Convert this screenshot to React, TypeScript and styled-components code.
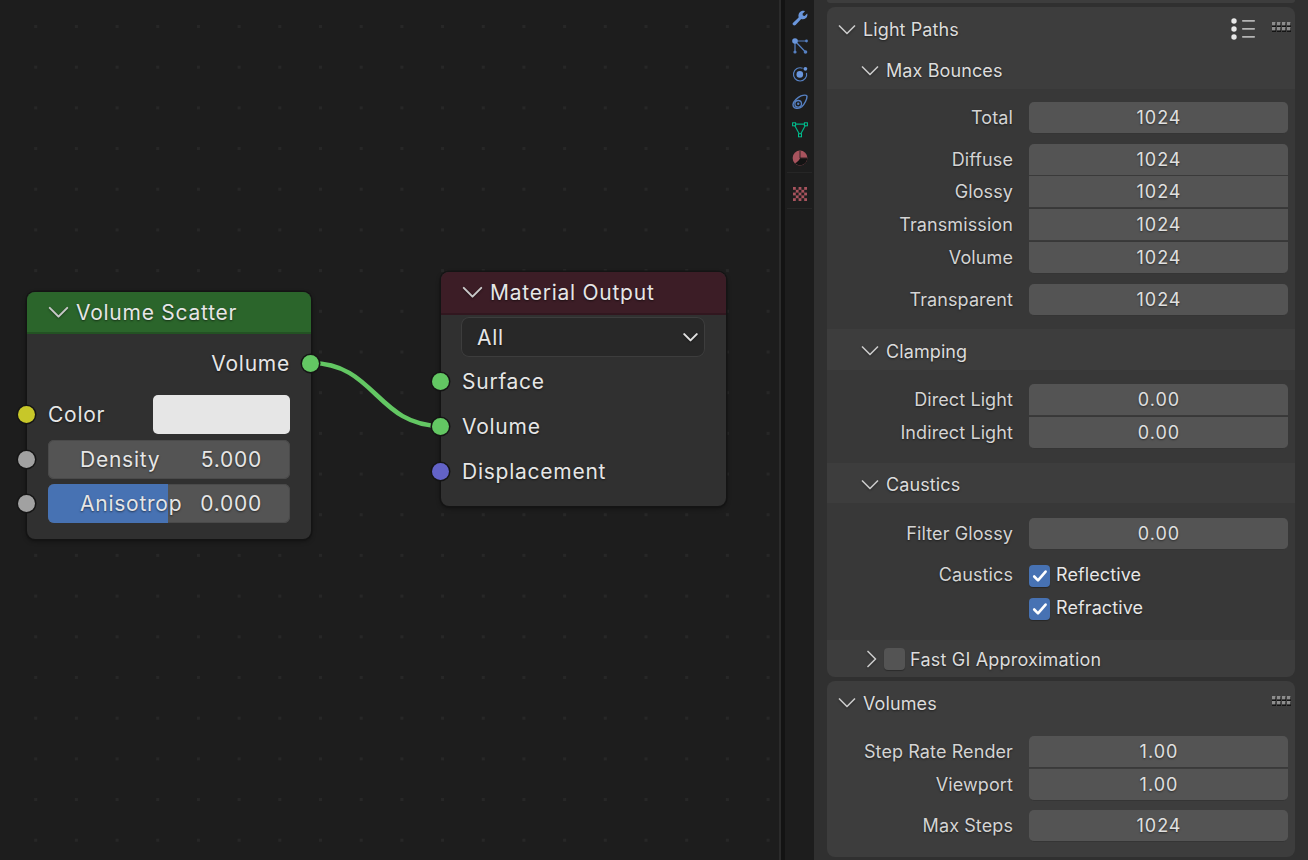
import React from "react";
import styled, { createGlobalStyle } from "styled-components";

const Global = createGlobalStyle`
  html, body { margin: 0; padding: 0; background: #1d1d1d; }
  body { font-family: Inter, "Noto Sans", sans-serif; overflow: hidden; }
`;

const Screen = styled.div`
  width: 1308px;
  height: 860px;
  display: flex;
  overflow: hidden;
  background: #1d1d1d;
`;

/* ---------- node editor ---------- */
const Canvas = styled.div`
  position: relative;
  width: 779px;
  height: 860px;
  flex: none;
  background-color: #1d1d1d;
  background-image: radial-gradient(circle at center, #272727 0, #272727 1.4px, transparent 1.9px);
  background-size: 40.7px 40.7px;
  background-position: 15.35px 6.15px;
`;

const Wire = styled.svg`
  position: absolute;
  left: 0;
  top: 0;
  pointer-events: none;
`;

const Node = styled.div<{ $x: number; $y: number; $w: number; $h: number }>`
  position: absolute;
  left: ${(p) => p.$x}px;
  top: ${(p) => p.$y}px;
  width: ${(p) => p.$w}px;
  height: ${(p) => p.$h}px;
  box-sizing: border-box;
  background: #303030;
  border-radius: 8px;
  box-shadow: 0 0 0 1.5px #141414, 0 2px 5px rgba(0, 0, 0, 0.45);
  color: #e6e6e6;
  font-size: 21px;
  letter-spacing: 0.75px;
  text-shadow: 0 1px 2px rgba(0, 0, 0, 0.55);
`;

const NodeHeader = styled.div<{ $bg: string; $h: number; $pb: number }>`
  height: ${(p) => p.$h}px;
  box-sizing: border-box;
  display: flex;
  align-items: center;
  gap: 7px;
  padding: 0 0 ${(p) => p.$pb}px 21px;
  background: ${(p) => p.$bg};
  border-radius: 8px 8px 0 0;
  border-bottom: 2px solid rgba(0, 0, 0, 0.18);
`;

const SocketRow = styled.div<{ $h: number; $right?: boolean; $mt?: number }>`
  position: relative;
  height: ${(p) => p.$h}px;
  margin-top: ${(p) => p.$mt ?? 0}px;
  display: flex;
  align-items: center;
  justify-content: ${(p) => (p.$right ? "flex-end" : "flex-start")};
  padding: 0 21px;
`;

const Socket = styled.span<{ $c: string; $right?: boolean }>`
  position: absolute;
  top: 50%;
  ${(p) => (p.$right ? "right: -8px;" : "left: -9px;")}
  width: 17px;
  height: 17px;
  margin-top: -8.5px;
  border-radius: 50%;
  background: ${(p) => p.$c};
  box-shadow: 0 0 0 1.5px #151515;
`;

const Swatch = styled.span`
  width: 137px;
  height: 39px;
  margin-left: auto;
  background: #e6e6e6;
  border-radius: 5px;
`;

const NodeSlider = styled.div`
  position: relative;
  flex: 1;
  height: 39px;
  display: flex;
  align-items: center;
  justify-content: space-between;
  box-sizing: border-box;
  padding: 0 28px 0 32px;
  border-radius: 6px;
  overflow: hidden;
  background: #545454;
  box-shadow: inset 0 0 0 1px #4a4a4a;
`;

const SliderFill = styled.span`
  position: absolute;
  left: 0;
  top: 0;
  bottom: 0;
  background: #4772b3;
`;

const SliderText = styled.span`
  position: relative;
`;

const NodeSelect = styled.div`
  height: 40px;
  margin: 2px 21px 0 20px;
  box-sizing: border-box;
  display: flex;
  align-items: center;
  justify-content: space-between;
  padding: 0 7px 0 16px;
  background: #282828;
  border-radius: 8px;
  box-shadow: inset 0 0 0 1px #3d3d3d;
`;

/* ---------- splitter & tabs ---------- */
const Splitter = styled.div`
  width: 6px;
  flex: none;
  display: flex;
`;
const SplitLight = styled.div`
  width: 2px;
  background: #2b2b2b;
`;
const SplitDark = styled.div`
  flex: 1;
  background: #131313;
`;

const TabColumn = styled.div`
  width: 29px;
  flex: none;
  background: #1d1d1d;
  display: flex;
  flex-direction: column;
  align-items: center;
  padding-top: 4px;
`;

const Tab = styled.div`
  width: 28px;
  height: 28px;
  display: flex;
  align-items: center;
  justify-content: center;
`;

const TabRule = styled.div<{ $mt: number; $mb: number }>`
  width: 25px;
  height: 1px;
  background: #262626;
  margin: ${(p) => p.$mt}px 0 ${(p) => p.$mb}px;
`;

/* ---------- properties ---------- */
const Props = styled.div`
  flex: 1;
  min-width: 0;
  background: #303030;
  padding: 0 13px;
  display: flex;
  flex-direction: column;
  color: #dcdcdc;
  font-size: 18px;
  letter-spacing: 0.1px;
  text-shadow: 0 1px 2px rgba(0, 0, 0, 0.5);
`;

const PanelStub = styled.div`
  height: 3px;
  flex: none;
  background: #3d3d3d;
  border-radius: 0 0 6px 6px;
`;

const Panel = styled.div<{ $mt: number }>`
  margin-top: ${(p) => p.$mt}px;
  background: #3d3d3d;
  border-radius: 8px;
  overflow: hidden;
  flex: none;
`;

const PanelHeader = styled.div<{ $h: number }>`
  position: relative;
  height: ${(p) => p.$h}px;
  display: flex;
  align-items: center;
  padding-left: 11px;
  gap: 7px;
`;

const PanelTools = styled.div`
  position: absolute;
  right: 4px;
  top: 10px;
  display: flex;
  gap: 17px;
  align-items: flex-start;
`;

const SubHeader = styled.div<{ $h: number; $pt?: number; $collapsed?: boolean }>`
  height: ${(p) => p.$h}px;
  box-sizing: border-box;
  display: flex;
  align-items: center;
  padding-top: ${(p) => p.$pt ?? 0}px;
  padding-left: ${(p) => (p.$collapsed ? 36 : 34)}px;
  gap: ${(p) => (p.$collapsed ? 3 : 7)}px;
`;

const SubBody = styled.div<{ $pt: number; $pb: number }>`
  background: #383838;
  padding: ${(p) => p.$pt}px 7px ${(p) => p.$pb}px 0;
  display: flex;
  flex-direction: column;
`;

const PanelBody = styled.div<{ $pt: number; $pb: number }>`
  padding: ${(p) => p.$pt}px 7px ${(p) => p.$pb}px 0;
  display: flex;
  flex-direction: column;
`;

const Row = styled.div<{ $mt?: number; $h?: number }>`
  display: grid;
  grid-template-columns: 186px 259px;
  column-gap: 16px;
  align-items: center;
  height: ${(p) => p.$h ?? 32}px;
  margin-top: ${(p) => p.$mt ?? 0}px;
`;

const Label = styled.div`
  text-align: right;
  white-space: nowrap;
  color: #d4d4d4;
  padding-bottom: 2px;
`;

const Field = styled.div<{ $pos: "single" | "top" | "mid" | "bottom" }>`
  height: 32px;
  box-sizing: border-box;
  background: #545454;
  display: flex;
  align-items: center;
  justify-content: center;
  padding-left: 1px;
  color: #e0e0e0;
  border-radius: ${(p) =>
    p.$pos === "single" ? "5px" : p.$pos === "top" ? "5px 5px 0 0" : p.$pos === "bottom" ? "0 0 5px 5px" : "0"};
  border-bottom: 1px solid ${(p) => (p.$pos === "top" || p.$pos === "mid" ? "#3a3a3a" : "#353535")};
  letter-spacing: 1px;
`;

const CheckLine = styled.div`
  display: flex;
  align-items: center;
  gap: 6px;
  color: #e6e6e6;
`;

const CheckText = styled.span`
  padding-bottom: 2px;
`;

const FastLabel = styled.span`
  padding-top: 2px;
  letter-spacing: 0.2px;
`;

const CheckBox = styled.span<{ $on?: boolean }>`
  width: 21px;
  height: 22px;
  flex: none;
  display: inline-flex;
  align-items: center;
  justify-content: center;
  border-radius: 4px;
  margin-right: ${(p) => (p.$on ? 0 : 2)}px;
  background: ${(p) => (p.$on ? "#4772b3" : "#545454")};
  box-shadow: 0 1px 1px rgba(0, 0, 0, 0.3);
`;

const Chev = ({
  open = true,
  size = 18,
  color = "#c8c8c8",
  weight = 1.7,
}: {
  open?: boolean;
  size?: number;
  color?: string;
  weight?: number;
}) => (
  <svg width={size} height={size} viewBox="0 0 18 18" fill="none" style={{ flex: "none", filter: "drop-shadow(0 1px 1px rgba(0,0,0,.4))" }}>
    {open ? (
      <path d="M1.5 5 L9 12.5 L16.5 5" stroke={color} strokeWidth={weight} strokeLinecap="round" strokeLinejoin="round" />
    ) : (
      <path d="M5 1.5 L12.5 9 L5 16.5" stroke={color} strokeWidth={weight} strokeLinecap="round" strokeLinejoin="round" />
    )}
  </svg>
);

const Check = () => (
  <svg width="16" height="14" viewBox="0 0 16 14" fill="none">
    <path d="M2.2 7.5 L6 11.3 L13.6 2.6" stroke="#fff" strokeWidth="2.6" strokeLinecap="round" strokeLinejoin="round" />
  </svg>
);

const Grip = () => (
  <svg width="19" height="10" viewBox="0 0 19 10" style={{ marginTop: 5 }}>
    {[0, 5, 10, 15].map((x) =>
      [0, 5].map((y) => (
        <g key={`${x}-${y}`}>
          <rect x={x} y={y + 1} width="4" height="4" fill="#141414" />
          <rect x={x} y={y} width="3.4" height="3.4" fill="#8d8d8d" />
        </g>
      ))
    )}
  </svg>
);

const ListIcon = () => (
  <svg width="24" height="22" viewBox="0 0 24 22" style={{ marginTop: 1 }}>
    {[3, 11, 19].map((y) => (
      <g key={y}>
        <circle cx="3" cy={y} r="2.7" fill="#e8e8e8" />
        <rect x="11" y={y - 1} width="13" height="1.7" rx="0.8" fill="#b4b4b4" />
      </g>
    ))}
  </svg>
);

const blue = "#5680c2";
const bright = "#6a96dc";
const red = "#a8535d";
const checker = [0, 1, 2, 3, 4].flatMap((r) =>
  [0, 1, 2, 3, 4].filter((c) => (r + c) % 2 === 1).map((c) => ({ r, c }))
);

const TabIcons = [
  <svg key="w" width="16" height="16" viewBox="0 0 16 16">
    <path
      d="M0.9 13 L6.6 7.4 C5.9 4.6 7.1 2 9.6 1.1 C10.9 0.7 12 0.8 13 1.3 L10.5 3.8 L10.9 5.6 L12.7 6 L15.2 3.5 C15.8 5.3 15.2 7 14 8 C12.6 9.3 10.9 9.6 9.2 9.1 L3.6 14.9 C2.8 15.6 1.7 15.5 1 14.8 C0.4 14.2 0.4 13.6 0.9 13 Z"
      fill={bright}
    />
  </svg>,
  <svg key="p" width="16" height="16" viewBox="0 0 16 16" fill="none">
    <path d="M3 3 L3 14 M3 3 L13.5 14 M3 3 H14.5" stroke={blue} strokeWidth="1.2" />
    <circle cx="3" cy="3" r="2.8" fill={bright} />
    <circle cx="14.5" cy="3" r="1.4" fill={blue} />
    <circle cx="3" cy="14" r="1.6" fill={blue} />
    <circle cx="13.5" cy="14" r="1.8" fill={blue} />
  </svg>,
  <svg key="o" width="16" height="16" viewBox="0 0 16 16" fill="none">
    <path d="M10.6 2.3 A6.6 6.6 0 1 0 14.5 6.9" stroke={blue} strokeWidth="1.2" />
    <circle cx="7.8" cy="8.4" r="3.3" fill={bright} />
    <circle cx="13.4" cy="2.8" r="1.9" fill={bright} />
  </svg>,
  <svg key="c" width="16" height="16" viewBox="0 0 16 16" fill="none">
    <path d="M1 10.5 C1 7.5 6 3.2 9 1.9 C11.5 0.9 15 0.5 15 2.6 C15 5 12.8 10 9.8 12.8 C7 15.2 1 15 1 10.5 Z" stroke={blue} strokeWidth="1.4" />
    <circle cx="6.2" cy="9.8" r="3.3" stroke={blue} strokeWidth="1.3" />
    <circle cx="6.2" cy="9.8" r="1.2" fill={blue} />
  </svg>,
  <svg key="m" width="16" height="16" viewBox="0 0 16 16" fill="none">
    <path d="M2 2.2 H14 L8 13.2 Z" stroke="#00b386" strokeWidth="1.2" />
    <rect x="0.6" y="0.8" width="3" height="3" fill="#1d1d1d" stroke="#00c08f" strokeWidth="1" />
    <rect x="12.4" y="0.8" width="3" height="3" fill="#1d1d1d" stroke="#00c08f" strokeWidth="1" />
    <rect x="6.5" y="11.8" width="3" height="3" fill="#1d1d1d" stroke="#00c08f" strokeWidth="1" />
  </svg>,
  <svg key="s" width="16" height="16" viewBox="0 0 16 16">
    <circle cx="8" cy="8" r="7.4" fill={red} />
    <path d="M8 1 V8 H15" stroke="#1a1a1a" strokeWidth="0.8" fill="none" />
    <path d="M8 8.2 H15.3 A7.4 7.4 0 0 1 2.9 13.3 C5 12.2 7 10.6 8 8.2 Z" fill="#131313" />
  </svg>,
  <svg key="t" width="14" height="14" viewBox="0 0 14 14">
    <rect width="14" height="14" fill={red} />
    {checker.map(({ r, c }) => (
      <rect key={`${r}-${c}`} x={c * 2.8} y={r * 2.8} width="2.8" height="2.8" fill="#1f1f1f" />
    ))}
  </svg>,
];

type F = { l: string; v: string; pos: "single" | "top" | "mid" | "bottom"; mt?: number };
const Fields = ({ rows }: { rows: F[] }) => (
  <>
    {rows.map((r) => (
      <Row key={r.l} $mt={r.mt}>
        <Label>{r.l}</Label>
        <Field $pos={r.pos}>{r.v}</Field>
      </Row>
    ))}
  </>
);

export default function App() {
  return (
    <Screen>
      <Global />
      <Canvas>
        <Wire width="779" height="860" fill="none">
          <path d="M311 363 C 375 363, 377 426, 441 426" stroke="#63c763" strokeWidth="4.5" />
        </Wire>

        <Node $x={27} $y={292} $w={284} $h={247}>
          <NodeHeader $bg="#2b652b" $h={42} $pb={0}>
            <Chev size={21} />
            Volume Scatter
          </NodeHeader>
          <SocketRow $h={42} $right $mt={8}>
            Volume
            <Socket $c="#63c763" $right />
          </SocketRow>
          <SocketRow $h={39} $mt={11}>
            Color
            <Swatch />
            <Socket $c="#c7c729" />
          </SocketRow>
          <SocketRow $h={39} $mt={6}>
            <NodeSlider>
              <SliderText>Density</SliderText>
              <SliderText>5.000</SliderText>
            </NodeSlider>
            <Socket $c="#a1a1a1" />
          </SocketRow>
          <SocketRow $h={39} $mt={5}>
            <NodeSlider>
              <SliderFill style={{ width: "49.6%" }} />
              <SliderText>Anisotrop</SliderText>
              <SliderText>0.000</SliderText>
            </NodeSlider>
            <Socket $c="#a1a1a1" />
          </SocketRow>
        </Node>

        <Node $x={441} $y={272} $w={285} $h={234}>
          <NodeHeader $bg="#3c1d26" $h={43} $pb={1}>
            <Chev size={21} />
            Material Output
          </NodeHeader>
          <NodeSelect>
            All
            <Chev size={15} color="#e0e0e0" weight={2.4} />
          </NodeSelect>
          <SocketRow $h={45} $mt={2}>
            Surface
            <Socket $c="#63c763" />
          </SocketRow>
          <SocketRow $h={45}>
            Volume
            <Socket $c="#63c763" />
          </SocketRow>
          <SocketRow $h={45}>
            Displacement
            <Socket $c="#6363c7" />
          </SocketRow>
        </Node>
      </Canvas>

      <Splitter>
        <SplitLight />
        <SplitDark />
      </Splitter>

      <TabColumn>
        {TabIcons.slice(0, 6).map((ic, i) => (
          <Tab key={i}>{ic}</Tab>
        ))}
        <TabRule $mt={0} $mb={7} />
        <Tab>{TabIcons[6]}</Tab>
        <TabRule $mt={0} $mb={0} />
      </TabColumn>

      <Props>
        <PanelStub />
        <Panel $mt={4}>
          <PanelHeader $h={45}>
            <Chev />
            Light Paths
            <PanelTools>
              <ListIcon />
              <Grip />
            </PanelTools>
          </PanelHeader>
          <SubHeader $h={37}>
            <Chev />
            Max Bounces
          </SubHeader>
          <SubBody $pt={13} $pb={13}>
            <Fields rows={[{ l: "Total", v: "1024", pos: "single" }]} />
            <Fields
              rows={[
                { l: "Diffuse", v: "1024", pos: "top", mt: 10 },
                { l: "Glossy", v: "1024", pos: "mid", mt: 0 },
                { l: "Transmission", v: "1024", pos: "mid", mt: 1 },
                { l: "Volume", v: "1024", pos: "bottom", mt: 1 },
              ]}
            />
            <Fields rows={[{ l: "Transparent", v: "1024", pos: "single", mt: 10 }]} />
          </SubBody>
          <SubHeader $h={41} $pt={3}>
            <Chev />
            Clamping
          </SubHeader>
          <SubBody $pt={14} $pb={14}>
            <Fields
              rows={[
                { l: "Direct Light", v: "0.00", pos: "top" },
                { l: "Indirect Light", v: "0.00", pos: "bottom", mt: 1 },
              ]}
            />
          </SubBody>
          <SubHeader $h={40} $pt={3}>
            <Chev />
            Caustics
          </SubHeader>
          <SubBody $pt={15} $pb={21}>
            <Fields rows={[{ l: "Filter Glossy", v: "0.00", pos: "single" }]} />
            <Row $mt={14} $h={22}>
              <Label>Caustics</Label>
              <CheckLine>
                <CheckBox $on>
                  <Check />
                </CheckBox>
                <CheckText>Reflective</CheckText>
              </CheckLine>
            </Row>
            <Row $mt={11} $h={22}>
              <span />
              <CheckLine>
                <CheckBox $on>
                  <Check />
                </CheckBox>
                <CheckText>Refractive</CheckText>
              </CheckLine>
            </Row>
          </SubBody>
          <SubHeader $h={37} $collapsed>
            <Chev open={false} />
            <CheckBox />
            <FastLabel>Fast GI Approximation</FastLabel>
          </SubHeader>
        </Panel>
        <Panel $mt={4}>
          <PanelHeader $h={44}>
            <Chev />
            Volumes
            <PanelTools>
              <Grip />
            </PanelTools>
          </PanelHeader>
          <PanelBody $pt={11} $pb={15}>
            <Fields
              rows={[
                { l: "Step Rate Render", v: "1.00", pos: "top" },
                { l: "Viewport", v: "1.00", pos: "bottom", mt: 1 },
              ]}
            />
            <Fields rows={[{ l: "Max Steps", v: "1024", pos: "single", mt: 9 }]} />
          </PanelBody>
        </Panel>
      </Props>
    </Screen>
  );
}
